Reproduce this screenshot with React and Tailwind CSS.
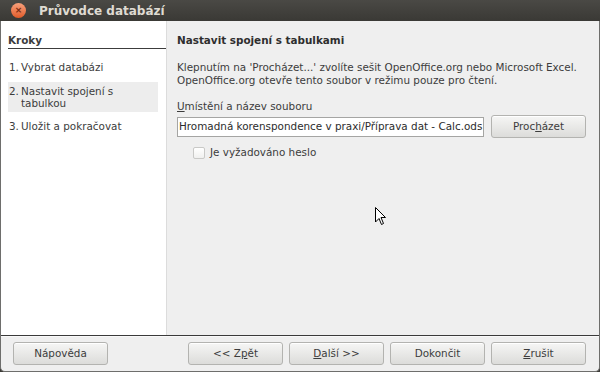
import React from "react";

const font = { fontFamily: '"DejaVu Sans", "Liberation Sans", sans-serif' };

function Btn({ children, className = "" }) {
  return (
    <button
      className={`h-[23px] w-[95px] rounded-[3px] border border-[#b3b3b0] bg-gradient-to-b from-[#f6f6f5] to-[#dcdcda] text-[10.4px] text-[#3c3c3c] shadow-[inset_0_1px_0_#fff] ${className}`}
    >
      {children}
    </button>
  );
}

export default function App() {
  return (
    <div
      className="relative flex h-[372px] w-[600px] flex-col overflow-hidden bg-[#3c3b37] text-[10.4px] text-[#3c3c3c]"
      style={font}
    >
      {/* title bar */}
      <div className="flex h-[21px] shrink-0 items-center bg-gradient-to-b from-[#4a4945] to-[#3a3935] pl-[11px]">
        <div className="flex h-[15px] w-[15px] items-center justify-center rounded-full bg-gradient-to-b from-[#f7a07b] to-[#e05a26] text-[9px] font-bold leading-none text-[#7a2a10]">
          ×
        </div>
        <span className="ml-[13px] text-[12px] font-bold text-[#dfdbd2]">Průvodce databází</span>
      </div>

      {/* body */}
      <div className="flex flex-1 flex-col rounded-b-[5px] border-x border-b border-[#6e6e6c] bg-[#efefef]">
        <div className="flex flex-1">
          {/* steps */}
          <div className="w-[165px] shrink-0 bg-white pl-[7px] pt-[13px]">
            <div className="border-b border-[#3c3c3c] pb-[1px] font-bold leading-[13px]">Kroky</div>
            <div className="mt-[12px] flex pl-[1px] leading-[13px]">
              <span className="w-[12px]">1.</span>
              <span>Vybrat databázi</span>
            </div>
            <div className="mt-[8px] mr-[8px] flex bg-[#ededed] py-[3px] pl-[1px] leading-[12px]">
              <span className="w-[12px]">2.</span>
              <span>
                Nastavit spojení s
                <br />
                tabulkou
              </span>
            </div>
            <div className="mt-[8px] flex pl-[1px] leading-[13px]">
              <span className="w-[12px]">3.</span>
              <span>Uložit a pokračovat</span>
            </div>
          </div>

          {/* page */}
          <div className="flex-1 border-l border-[#dcdcdc] pl-[10px] pr-[12px] pt-[13px]">
            <div className="font-bold leading-[13px] text-[#2e2e2e]">Nastavit spojení s tabulkami</div>
            <p className="mt-[14px] leading-[13px]">
              Klepnutím na 'Procházet...' zvolíte sešit OpenOffice.org nebo Microsoft Excel.
              <br />
              OpenOffice.org otevře tento soubor v režimu pouze pro čtení.
            </p>
            <div className="mt-[13px] leading-[13px]">
              <u>U</u>místění a název souboru
            </div>
            <div className="mt-[2px] flex items-center gap-[7px]">
              <div className="flex h-[20px] w-[307px] items-center overflow-hidden whitespace-nowrap border border-[#a5a5a3] bg-white pl-[1px] text-[#2c2c2c]">
                Hromadná korenspondence v praxi/Příprava dat - Calc.ods
              </div>
              <Btn className="h-[21px]">
                Proc<u>h</u>ázet
              </Btn>
            </div>
            <div className="ml-[16px] mt-[7px] flex items-center gap-[5px]">
              <div className="h-[12px] w-[12px] rounded-[2px] border border-[#c9c9c7] bg-gradient-to-b from-white to-[#f0f0ef]" />
              <span>
                <u>J</u>e vyžadováno heslo
              </span>
            </div>
          </div>
        </div>

        {/* buttons */}
        <div className="flex h-[36px] shrink-0 items-center border-t border-[#3a3a3a] px-[12px] shadow-[inset_0_1px_0_#f9f9f9]">
          <Btn>Nápověda</Btn>
          <div className="flex-1" />
          <div className="flex gap-[6px] pr-[1px]">
            <Btn>
              {"<< Z"}
              <u>p</u>ět
            </Btn>
            <Btn>
              <u>D</u>alší {">>"}
            </Btn>
            <Btn>Dokončit</Btn>
            <Btn>
              <u>Z</u>rušit
            </Btn>
          </div>
        </div>
      </div>

      {/* mouse pointer */}
      <svg className="absolute left-[375px] top-[207px]" width="12" height="19" viewBox="0 0 12 19">
        <path d="M0.5 0.5 L0.5 15 L4 11.5 L6.5 17.5 L8.5 16.5 L6 10.5 L10.5 10.5 Z" fill="#fff" stroke="#000" strokeWidth="1" />
      </svg>
    </div>
  );
}
